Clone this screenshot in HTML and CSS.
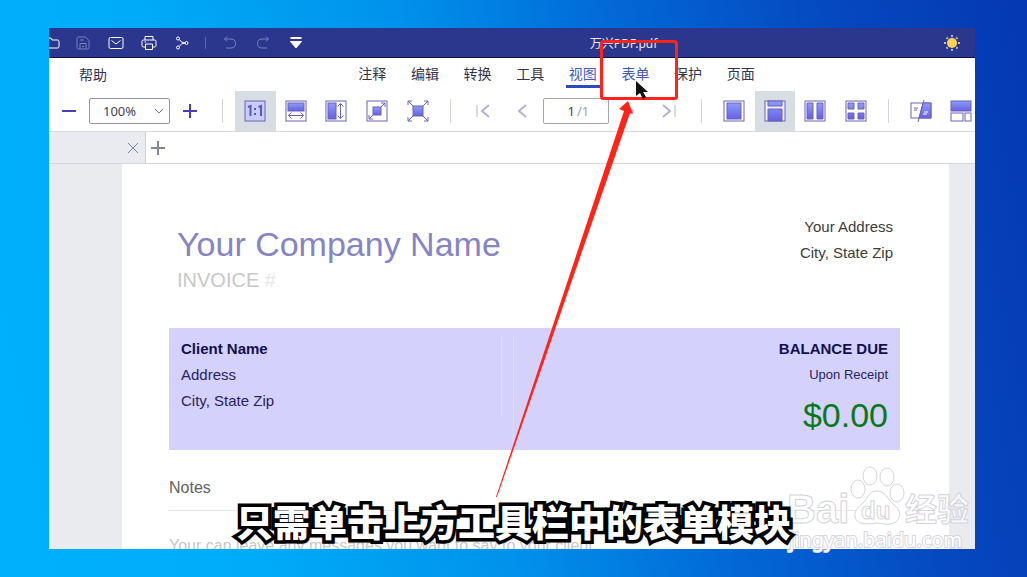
FILE: index.html
```html
<!DOCTYPE html>
<html lang="zh-CN">
<head>
    <meta charset="UTF-8">
    <meta name="viewport" content="width=device-width, initial-scale=1.0">
    <title>万兴PDF.pdf</title>
    <link rel="stylesheet" href="styles.css">
</head>
<body>
    <svg width="0" height="0" class="defs" aria-hidden="true">
        <defs>
            <linearGradient id="fill" x1="0" y1="0" x2="0" y2="1">
                <stop offset="0" stop-color="#8e9cfb"/>
                <stop offset="1" stop-color="#6560e0"/>
            </linearGradient>
        </defs>
    </svg>

    <main class="window">
        <header class="titlebar">
            <div class="quick">
                <button class="quick-btn" aria-label="打开"><svg width="16" height="16" viewBox="0 0 16 16"><path d="M0 3h5l1 2h5.500Q13 5 13 6.500v5q0 1.500-1.500 1.500H0"/></svg></button>
                <button class="quick-btn dim" aria-label="保存"><svg width="16" height="16" viewBox="0 0 16 16"><path d="M2 3.500Q2 2 3.500 2h7L14 5.500v7q0 1.500-1.500 1.500h-9Q2 14 2 12.500zM5 14V8.500h6V14M5 5h4M7 11.500h2"/></svg></button>
                <button class="quick-btn" aria-label="邮件"><svg width="16" height="16" viewBox="0 0 16 16"><rect x="1" y="2.500" width="14" height="11" rx="1.500"/><path d="M3.500 5.500L8 9l4.500-3.500"/></svg></button>
                <button class="quick-btn" aria-label="打印"><svg width="16" height="16" viewBox="0 0 16 16"><path d="M4 5V1.500h8V5M4 12H2.500Q1 12 1 10.500v-4Q1 5 2.500 5h11Q15 5 15 6.500v4q0 1.500-1.500 1.500H12M4.500 9h7v5.500h-7zM3.500 7h1.500"/></svg></button>
                <button class="quick-btn" aria-label="分享"><svg width="16" height="16" viewBox="0 0 16 16"><circle cx="4" cy="3.500" r="1.500"/><circle cx="4" cy="12.500" r="1.500"/><circle cx="12.500" cy="8" r="1.500"/><path d="M5.200 4.800Q8 8 11 8Q7.500 8 5.200 11.300"/></svg></button>
                <span class="quick-sep"></span>
                <button class="quick-btn dim" aria-label="撤销"><svg width="16" height="16" viewBox="0 0 16 16"><path d="M5 1.500L2.500 4 5 6.500M2.500 4h6.500q4.500 0 4.500 4.500T9 13H4"/></svg></button>
                <button class="quick-btn dim" aria-label="重做"><svg width="16" height="16" viewBox="0 0 16 16"><path d="M11 1.500L13.500 4 11 6.500M13.500 4H7Q2.500 4 2.500 8.500T7 13h5"/></svg></button>
                <button class="quick-btn" aria-label="更多"><svg width="16" height="16" viewBox="0 0 16 16"><path d="M2.500 3h11" stroke-width="2"/><path class="solid" d="M2.500 6.500h11L8 13z"/></svg></button>
            </div>
            <h1 class="file-name">万兴PDF.pdf</h1>
            <button class="theme-btn" aria-label="主题">
                <svg width="16" height="16" viewBox="0 0 16 16">
                    <path d="M8 0v16M0 8h16M2.500 2.500l11 11M13.500 2.500l-11 11" stroke="#bcb8c8" stroke-width="2"/>
                    <circle cx="8" cy="8" r="6" fill="#2b378c"/>
                    <circle cx="8" cy="8" r="5" fill="#ffd452"/>
                </svg>
            </button>
        </header>

        <nav class="menubar">
            <a class="help" href="#">帮助</a>
            <div class="menus">
                <a href="#">注释</a>
                <a href="#">编辑</a>
                <a href="#">转换</a>
                <a href="#">工具</a>
                <a class="active" href="#">视图</a>
                <a class="hover" href="#">表单</a>
                <a href="#">保护</a>
                <a href="#">页面</a>
            </div>
        </nav>

        <div class="toolbar">
            <div class="zoom">
                <button aria-label="缩小"><svg width="16" height="16" viewBox="0 0 16 16"><path d="M1 8h14" stroke-width="2"/></svg></button>
                <label class="zoom-box">
                    <select aria-label="缩放比例"><option>100%</option></select>
                    <svg width="10" height="6" viewBox="0 0 10 6"><path d="M1 1l4 4 4-4" stroke="#777b8c"/></svg>
                </label>
                <button aria-label="放大"><svg width="16" height="16" viewBox="0 0 16 16"><path d="M1 8h14M8 1v14" stroke-width="2"/></svg></button>
            </div>
            <span class="sep"></span>
            <div class="fit group">
                <button class="on" aria-label="实际大小"><svg width="22" height="22" viewBox="0 0 22 22"><rect x="1" y="1" width="20" height="20" fill="#c9ccf6"/><path d="M4 7l2.500-1v10M14.500 7L17 6v10" stroke="#5f54c4" stroke-width="2"/><path d="M10 8h2v2h-2zM10 13h2v2h-2z" fill="#5f54c4" stroke="none"/></svg></button>
                <button aria-label="适合宽度"><svg width="22" height="22" viewBox="0 0 22 22"><rect x="1" y="1" width="20" height="20"/><rect x="3" y="3" width="16" height="8" fill="url(#fill)"/><path d="M3.500 15.500h15M6.500 12.500l-3 3 3 3M15.500 12.500l3 3-3 3"/></svg></button>
                <button aria-label="适合高度"><svg width="22" height="22" viewBox="0 0 22 22"><rect x="1" y="1" width="20" height="20"/><rect x="3" y="3" width="8" height="16" fill="url(#fill)"/><path d="M15.500 3.500v15M12.500 6.500l3-3 3 3M12.500 15.500l3 3 3-3"/></svg></button>
                <button aria-label="适合页面"><svg width="22" height="22" viewBox="0 0 22 22"><rect x="1" y="1" width="20" height="20"/><rect x="7" y="7" width="8" height="8" fill="url(#fill)"/><path d="M15 7l4-4M15 3h4v4M7 15l-4 4M3 15v4h4"/></svg></button>
                <button aria-label="全屏"><svg width="22" height="22" viewBox="0 0 22 22"><rect x="6" y="6" width="10" height="10" fill="url(#fill)"/><path d="M6 6L1 1M1 5V1h4M16 6l5-5M17 1h4v4M6 16l-5 5M1 17v4h4M16 16l5 5M17 21h4v-4"/></svg></button>
            </div>
            <span class="sep"></span>
            <div class="pager">
                <button aria-label="首页"><svg width="14" height="14" viewBox="0 0 14 14"><path d="M1 1v12" stroke-width="1"/><path d="M13 1L6 7l7 6"/></svg></button>
                <button aria-label="上一页"><svg width="14" height="14" viewBox="0 0 14 14"><path d="M10 1L3 7l7 6"/></svg></button>
                <label class="page-box"><input type="text" value="1" aria-label="页码"><span>/1</span></label>
                <button aria-label="下一页"><svg width="14" height="14" viewBox="0 0 14 14"><path d="M4 1l7 6-7 6"/></svg></button>
                <button aria-label="末页"><svg width="14" height="14" viewBox="0 0 14 14"><path d="M1 1l7 6-7 6"/><path d="M13 1v12" stroke-width="1"/></svg></button>
            </div>
            <span class="sep"></span>
            <div class="layout group">
                <button aria-label="单页"><svg width="22" height="22" viewBox="0 0 22 22"><rect x="1" y="1" width="20" height="20"/><rect x="4" y="3" width="14" height="16" fill="url(#fill)"/></svg></button>
                <button class="on" aria-label="连续"><svg width="22" height="22" viewBox="0 0 22 22"><rect x="1" y="1" width="20" height="20" fill="#f0f0ff"/><path d="M4 1h14v5H4zM4 9h14v12H4z" fill="url(#fill)"/></svg></button>
                <button aria-label="双页"><svg width="22" height="22" viewBox="0 0 22 22"><rect x="1" y="1" width="20" height="20"/><path d="M3 3h6v16H3zM13 3h6v16h-6z" fill="url(#fill)"/></svg></button>
                <button aria-label="双页连续"><svg width="22" height="22" viewBox="0 0 22 22"><rect x="1" y="1" width="20" height="20"/><path d="M3 3h6v6H3zM13 3h6v6h-6zM3 13h6v6H3zM13 13h6v6h-6z" fill="url(#fill)"/></svg></button>
            </div>
            <span class="sep"></span>
            <div class="extra group">
                <button aria-label="比较"><svg width="22" height="22" viewBox="0 0 22 22"><rect x="1" y="3" width="20" height="15"/><path d="M13 3h8v15H9z" fill="url(#fill)"/><path d="M14 0L8 22" stroke-width="1"/><path d="M4 8h4M4 10h3"/><path d="M14 12h4M13 14h4" stroke="#fff"/></svg></button>
                <button aria-label="拆分"><svg width="22" height="22" viewBox="0 0 22 22"><rect x="1" y="1" width="20" height="10" fill="url(#fill)"/><rect x="1" y="13" width="12" height="8"/><rect x="15" y="13" width="6" height="8"/></svg></button>
            </div>
        </div>

        <div class="tabs">
            <div class="tab"><button aria-label="关闭"><svg width="12" height="12" viewBox="0 0 12 12"><path d="M1 1l10 10M11 1L1 11" stroke="#7c86d0"/></svg></button></div>
            <button class="new-tab" aria-label="新标签"><svg width="16" height="16" viewBox="0 0 16 16"><path d="M1 8h14M8 1v14" stroke="#858799" stroke-width="2"/></svg></button>
        </div>

        <div class="viewer">
            <article class="page">
                <section class="company">
                    <div>
                        <h2>Your Company Name</h2>
                        <p class="invoice">INVOICE <span>#</span></p>
                    </div>
                    <address>Your Address<br>City, State Zip</address>
                </section>
                <section class="balance">
                    <div class="client">
                        <h3>Client Name</h3>
                        <p>Address</p>
                        <p>City, State Zip</p>
                    </div>
                    <div class="due">
                        <h3>BALANCE DUE</h3>
                        <p class="term">Upon Receipt</p>
                        <p class="amount">$0.00</p>
                    </div>
                </section>
                <section class="notes">
                    <h3>Notes</h3>
                    <p>Your can leave any messages you want to say to your client.</p>
                </section>
            </article>
        </div>
    </main>

    <!-- tutorial marks drawn over the window -->
    <svg class="marks" width="1027" height="577" viewBox="0 0 1027 577" aria-hidden="true">
        <g class="watermark">
            <text x="787" y="523" font-size="40">Bai</text>
            <ellipse cx="858" cy="489" rx="7" ry="9"/>
            <ellipse cx="870" cy="476" rx="7" ry="9"/>
            <ellipse cx="887" cy="477" rx="7" ry="9"/>
            <ellipse cx="897" cy="493" rx="7" ry="9"/>
            <path d="M877 491c8 0 10 7 15 12 6 5 9 9 7 14-2 8-10 8-22 6-13 2-20 1-22-6-1-6 3-10 8-14 5-5 6-12 14-12z"/>
            <text x="861" y="519" font-size="24">du</text>
            <text x="905" y="521" font-size="32" class="cjk">经验</text>
            <text x="789" y="547" font-size="20" class="site">jingyan.baidu.com</text>
        </g>
        <rect x="601.500" y="41.500" width="75" height="57" rx="2" fill="none" stroke="#ff2318" stroke-width="3"/>
        <path d="M628 101l5 13-3-1L497 497h-1L624 111l-5-2z" fill="#ff2318"/>
        <path d="M636 81v15l4-3 3 6 3-2-3-5h5z" fill="#111"/>
    </svg>
    <p class="caption">只需单击上方工具栏中的表单模块</p>
</body>
</html>
```

FILE: styles.css
```css
* {
    box-sizing: border-box;
}
body {
    position: relative;
    display: flex;
    height: 100vh;
    margin: 0;
    padding: 28px 52px 28px 49px;
    overflow: hidden;
    font-family: "Noto Sans", "Noto Sans CJK SC", sans-serif;
    font-size: 14px;
    color: #34344a;
    background: linear-gradient(78deg, #00b0fa 0%, #00acf8 22%, #0092ec 45%, #0268d6 64%, #0549c0 82%, #0538b2 100%);
}
h1, h2, h3, p {
    margin: 0;
    font-weight: normal;
}
button {
    display: flex;
    align-items: center;
    justify-content: center;
    padding: 0;
    border: none;
    background: none;
    cursor: pointer;
}
a {
    color: inherit;
    text-decoration: none;
}
svg {
    flex: none;
    fill: none;
}
.defs {
    position: absolute;
}
.window {
    display: flex;
    flex: 1;
    flex-direction: column;
    min-width: 0;
    overflow: hidden;
    background: #fff;
}

/* title bar */
.titlebar {
    display: grid;
    grid-template-columns: 1fr auto 1fr;
    flex: none;
    height: 30px;
    padding-right: 15px;
    align-items: center;
    background: #2b378c;
    border-bottom: 1px solid #0d0e52;
}
.quick {
    display: flex;
    align-items: center;
    margin-left: -7px;
}
.quick-btn {
    width: 33px;
    height: 28px;
    stroke: #fff;
}
.quick-btn:first-child {
    width: 24px;
}
.quick-btn.dim {
    stroke: #7882bd;
}
.solid {
    fill: #fff;
}
.quick-sep {
    width: 1px;
    height: 12px;
    margin: 0 7px;
    background: #5964a6;
}
.file-name {
    padding-left: 238px;
    font-size: 12px;
    color: #e8e9f6;
}
.theme-btn {
    justify-self: end;
}

/* menus */
.menubar {
    display: flex;
    flex: none;
    height: 33px;
    padding-left: 30px;
    color: #34344a;
}
.help {
    width: 267px;
    padding-top: 7px;
    line-height: 20px;
}
.menus {
    display: grid;
    grid-template-columns: repeat(8, 1fr);
    width: 421px;
    text-align: center;
}
.menus a {
    height: 30px;
    margin: 0 9px;
    padding-top: 6px;
    line-height: 20px;
}
.menus .active {
    color: #4459bb;
    border-bottom: 3px solid #2b4bc0;
}
.menus .hover {
    color: #4459bb;
}

/* toolbar */
.toolbar {
    display: flex;
    flex: none;
    align-items: center;
    height: 41px;
    padding-left: 10px;
    overflow: hidden;
    border-bottom: 1px solid #d9dae0;
}
.toolbar > * {
    flex: none;
}
.toolbar svg {
    stroke: #6b62b4;
}
.sep {
    width: 1px;
    height: 24px;
    margin: 0 12px;
    background: #d4d5dc;
}
.zoom {
    display: flex;
    align-items: center;
    gap: 10px;
    width: 151px;
}
.zoom button {
    width: 20px;
    height: 24px;
}
.zoom button svg {
    stroke: #4a3db8;
}
.zoom-box {
    display: grid;
    align-items: center;
    width: 81px;
    height: 26px;
    border: 1px solid #9394a8;
    border-radius: 2px;
}
.zoom-box select, .zoom-box svg {
    grid-area: 1 / 1;
}
.zoom-box select {
    height: 24px;
    padding: 0 0 0 13px;
    border: none;
    background: none;
    appearance: none;
    font: inherit;
    font-size: 13px;
    color: #44445a;
}
.zoom-box svg {
    justify-self: end;
    margin-right: 5px;
    pointer-events: none;
}
.group {
    display: grid;
    height: 40px;
}
.fit {
    grid-template-columns: repeat(5, 1fr);
    width: 203px;
}
.layout {
    grid-template-columns: repeat(4, 1fr);
    width: 162px;
}
.extra {
    grid-template-columns: repeat(2, 1fr);
    width: 80px;
}
.on {
    background: #d8dce3;
}
.pager {
    display: flex;
    align-items: center;
}
.pager button {
    width: 40px;
    height: 28px;
}
.pager svg {
    stroke: #b6afdc;
    stroke-width: 2;
}
.page-box {
    display: flex;
    align-items: center;
    width: 66px;
    height: 26px;
    border: 1px solid #a2a2b4;
    border-radius: 2px;
    font-size: 13px;
    color: #a0a0a8;
}
.page-box input {
    width: 33px;
    padding: 0 2px 0 0;
    border: none;
    background: none;
    font: inherit;
    text-align: right;
    color: #44444e;
}

/* document tabs */
.tabs {
    display: flex;
    flex: none;
    height: 32px;
    background: #fff;
    border-bottom: 1px solid #d5d6dc;
}
.tab {
    display: flex;
    align-items: center;
    justify-content: flex-end;
    width: 97px;
    padding-right: 6px;
    background: #eaebf0;
    border-right: 1px solid #d0d1da;
}
.new-tab {
    width: 24px;
}

/* document */
.viewer {
    flex: 1;
    min-height: 0;
    padding: 0 26px 0 73px;
    overflow: hidden;
    background: #eaebef;
}
.page {
    min-height: 100%;
    padding: 50px 49px 0 47px;
    background: #fff;
    font-family: "Liberation Sans", Arial, sans-serif;
    font-size: 15px;
    line-height: 26px;
}
.company {
    display: flex;
    justify-content: space-between;
    height: 114px;
    padding: 0 7px 0 8px;
}
.company h2 {
    padding-top: 6px;
    font-size: 34px;
    line-height: 48px;
    color: #8584c6;
}
.invoice {
    font-size: 20px;
    line-height: 24px;
    color: #c8c8c8;
}
.invoice span {
    color: #e8e8e8;
}
address {
    font-style: normal;
    text-align: right;
    color: #3c3c3c;
}
.balance {
    display: flex;
    justify-content: space-between;
    height: 122px;
    padding: 8px 12px;
    background: #d4d2fc;
    color: #28235c;
}
.balance h3 {
    font-size: 15px;
    font-weight: bold;
    color: #120f50;
}
.client {
    width: 321px;
    height: 80px;
    border-right: 1px solid #dedcff;
}
.due {
    flex: 1;
    margin-left: 11px;
    text-align: right;
    border-left: 1px solid #dedcff;
}
.term {
    font-size: 13px;
}
.amount {
    font-size: 34px;
    line-height: 54px;
    color: #087818;
}
.notes h3 {
    height: 61px;
    padding-top: 25px;
    font-size: 16px;
    color: #626262;
    border-bottom: 1px solid #e6e6e6;
}
.notes p {
    padding-top: 22px;
    font-size: 16px;
    color: #c8c8c8;
}

/* overlays */
.marks {
    position: absolute;
    top: 0;
    left: 0;
    pointer-events: none;
}
.watermark {
    fill: rgba(255, 255, 255, 0.7);
    stroke: #d4d4da;
    stroke-width: 1px;
    font-family: "Liberation Sans", sans-serif;
    font-weight: 700;
}
.watermark .cjk {
    font-family: "Noto Sans CJK SC", sans-serif;
}
.watermark .site {
    fill: #fff;
    stroke-width: 2px;
    font-family: "Noto Sans", sans-serif;
    font-weight: 400;
    paint-order: stroke;
}
.caption {
    position: absolute;
    left: 0;
    right: 0;
    bottom: 30px;
    font-family: "Noto Sans CJK SC", sans-serif;
    font-size: 37px;
    font-weight: 900;
    line-height: 52px;
    text-align: center;
    white-space: nowrap;
    color: #fff;
    -webkit-text-stroke: 7px #000;
    paint-order: stroke fill;
    text-shadow: 2px 2px 3px rgba(0, 0, 0, 0.6);
}
```
